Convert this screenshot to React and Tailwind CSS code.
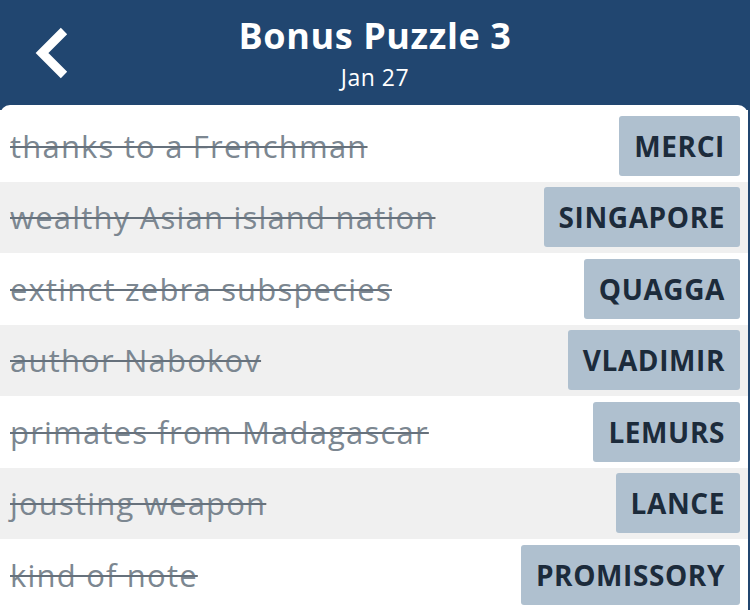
import React from 'react';

const clues = [
  { clue: 'thanks to a Frenchman', answer: 'MERCI' },
  { clue: 'wealthy Asian island nation', answer: 'SINGAPORE' },
  { clue: 'extinct zebra subspecies', answer: 'QUAGGA' },
  { clue: 'author Nabokov', answer: 'VLADIMIR' },
  { clue: 'primates from Madagascar', answer: 'LEMURS' },
  { clue: 'jousting weapon', answer: 'LANCE' },
  { clue: 'kind of note', answer: 'PROMISSORY' },
];

function App() {
  return (
    <div
      className="w-[750px] h-[610px] overflow-hidden bg-[#214670]"
      style={{ fontFamily: '"Open Sans", "Noto Sans", sans-serif' }}
    >
      {/* header */}
      <div className="relative h-[105px] flex flex-col items-center text-white">
        <button className="absolute left-[20px] top-[15px] w-[80px] h-[80px]">
          <svg width="80" height="80" viewBox="0 0 80 80">
            <path d="M44 16 L22 38 L44 60" fill="none" stroke="white" strokeWidth="9" strokeLinecap="butt" strokeLinejoin="miter" />
          </svg>
        </button>
        <h1 className="mt-[12px] text-[36px] font-bold leading-[48px] tracking-[0.6px]">Bonus Puzzle 3</h1>
        <p className="mt-[3px] text-[23px] leading-[28px] tracking-[0.5px]">Jan 27</p>
      </div>

      {/* clue list */}
      <div className="h-[505px] bg-white rounded-t-[10px] pt-[5px] mr-[2px]">
        {clues.map((c, i) => (
          <div
            key={c.answer}
            className={`h-[71.5px] flex items-center justify-between pl-[10px] pr-[8px] ${i % 2 === 1 ? 'bg-[#f0f0f0]' : 'bg-white'}`}
          >
            <span className="text-[31px] tracking-[1.2px] text-[#7c8791] line-through decoration-[1.5px] decoration-[#66717c]">
              {c.clue}
            </span>
            <span className="h-[60px] flex items-center px-[15px] rounded-[3px] bg-[#afc0cf] text-[#1c2b3b] text-[28px] font-bold tracking-[0.6px]">
              {c.answer}
            </span>
          </div>
        ))}
      </div>
    </div>
  );
}

export default App;
